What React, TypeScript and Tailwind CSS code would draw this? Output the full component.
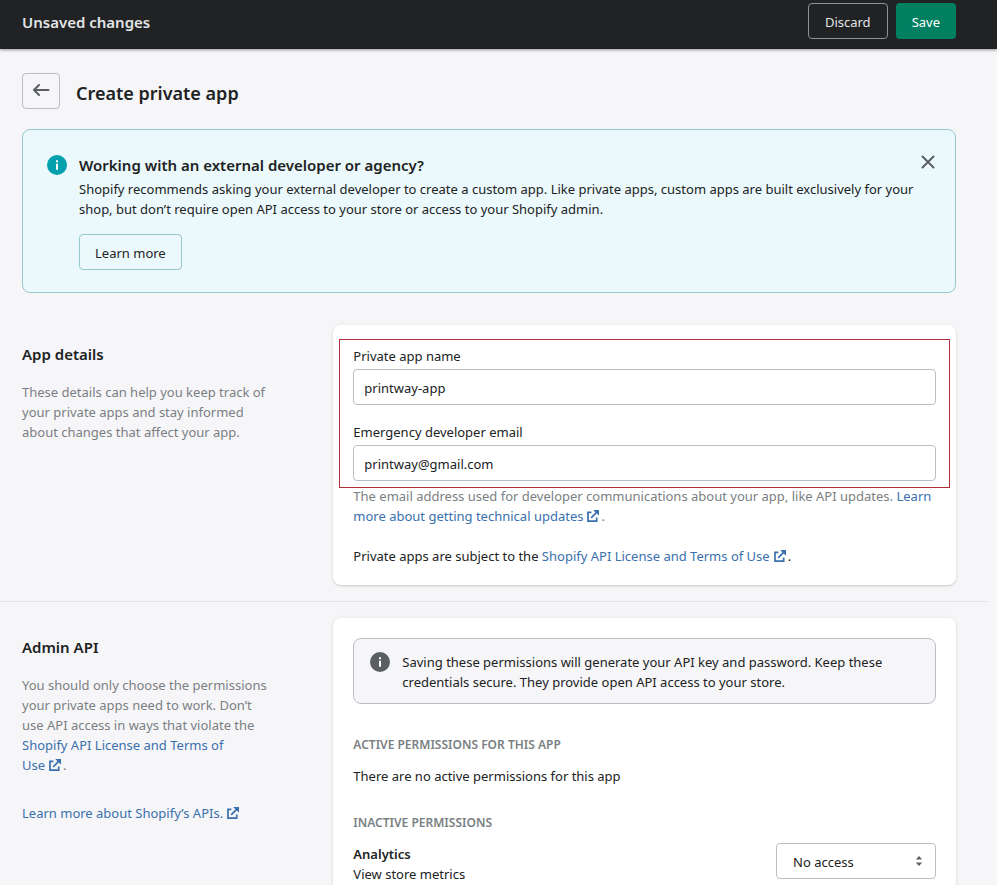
import React from "react";

function ExternalIcon() {
  return (
    <svg viewBox="0 0 12 12" className="mr-0.5 ml-1 inline h-3 w-3 align-[-1px]" fill="none" stroke="currentColor" strokeWidth="1.7" aria-hidden="true">
      <path d="M4.4 2.4H1v8.7h8.7V7.4" />
      <path d="M4.2 7.8 9.8 2.2" />
      <path d="M6.2 0H12v5.8L10.3 4.1 7.9 1.7z" fill="currentColor" stroke="none" />
    </svg>
  );
}

function InfoIcon({ className }: { className: string }) {
  return (
    <svg viewBox="0 0 20 20" className={className} aria-hidden="true">
      <circle cx="10" cy="10" r="10" fill="currentColor" />
      <path d="M9 5.2h2v2H9zM9 8.8h2v6H9z" fill="#fff" />
    </svg>
  );
}

function ExternalLink({ text, lastWord }: { text: string; lastWord: string }) {
  return (
    <a href="#" className="text-[#3a70ad] hover:underline">
      {text}{" "}
      <span className="whitespace-nowrap">
        {lastWord}
        <ExternalIcon />
      </span>
    </a>
  );
}

function TextField({ id, label, type, value }: { id: string; label: string; type: string; value: string }) {
  return (
    <div className="flex flex-col gap-[3px]">
      <label htmlFor={id}>{label}</label>
      <input
        id={id}
        type={type}
        defaultValue={value}
        className="h-9 w-full rounded border border-[#babfc3] bg-white px-2.5 pt-0.5 outline-none"
      />
    </div>
  );
}

function Section({ title, description, children }: { title: string; description: React.ReactNode; children: React.ReactNode }) {
  return (
    <section className="grid grid-cols-3 pr-8 pl-[22px]">
      <div className="pt-[19px] pr-16">
        <h2 className="text-[15px] leading-5 font-semibold">{title}</h2>
        <div className="mt-[18px] text-[#7a7f83]">{description}</div>
      </div>
      <div className="col-span-2 rounded-lg bg-white p-5 shadow-[0_0_5px_rgba(23,24,24,0.05),0_1px_2px_rgba(0,0,0,0.15)]">
        {children}
      </div>
    </section>
  );
}

export default function App() {
  return (
    <div className="h-screen overflow-hidden bg-[#f6f6f8] font-['Noto_Sans','Open_Sans',sans-serif] text-[13px] leading-5 text-[#202223]">
      <header className="flex items-center justify-between bg-[#202223] pt-[3px] pr-[41px] pb-2.5 pl-[22px] shadow-[0_1px_3px_rgba(0,0,0,0.4)]">
        <span className="pt-0.5 text-[15px] font-semibold text-[#e3e5e7]">Unsaved changes</span>
        <div className="flex gap-2">
          <button className="h-9 rounded border border-[#8c9196] px-4 pt-0.5 text-[#e3e5e7]">Discard</button>
          <button className="h-9 rounded bg-[#008060] px-4 pt-0.5 text-white">Save</button>
        </div>
      </header>

      <main className="mr-[9px]">
        <div className="flex items-center gap-4 pt-6 pr-8 pl-[22px]">
          <button aria-label="Back" className="flex h-9 w-[38px] items-center justify-center rounded border border-[#babfc3] text-[#5c5f62]">
            <svg viewBox="0 0 18 14" className="h-3.5 w-[18px]" fill="none" stroke="currentColor" strokeWidth="2" strokeLinecap="round" strokeLinejoin="round" aria-hidden="true">
              <path d="M16.5 6H2M7 1 2 6l5 5" />
            </svg>
          </button>
          <h1 className="pt-1 text-lg leading-7 font-semibold">Create private app</h1>
        </div>

        <div className="mt-5 mr-8 ml-[22px] flex rounded-lg border border-[#98c6cd] bg-[#ebf9fc] pt-[25px] pr-5 pb-[22px] pl-6">
          <InfoIcon className="h-5 w-5 shrink-0 text-[#00a0ac]" />
          <div className="ml-3 flex-1">
            <h2 className="mb-1 text-[15px] leading-5 font-semibold">Working with an external developer or agency?</h2>
            <p>
              Shopify recommends asking your external developer to create a custom app. Like private apps, custom apps are built
              exclusively for your shop, but don’t require open API access to your store or access to your Shopify admin.
            </p>
            <button className="mt-[15px] h-9 rounded border border-[#98c6cd] px-[15px] pt-0.5">Learn more</button>
          </div>
          <button aria-label="Dismiss" className="flex h-3.5 w-3.5 items-center justify-center text-[#5c5f62]">
            <svg viewBox="0 0 14 14" className="h-3.5 w-3.5" fill="none" stroke="currentColor" strokeWidth="2" strokeLinecap="round" aria-hidden="true">
              <path d="m1.5 1.5 11 11M12.5 1.5l-11 11" />
            </svg>
          </button>
        </div>

        <div className="mt-8">
          <Section
            title="App details"
            description="These details can help you keep track of your private apps and stay informed about changes that affect your app."
          >
            <div className="relative mt-px flex flex-col gap-[17px]">
              <TextField id="app-name" label="Private app name" type="text" value="printway-app" />
              <TextField id="dev-email" label="Emergency developer email" type="email" value="printway@gmail.com" />
              <div className="pointer-events-none absolute -inset-x-3.5 -inset-y-[7px] border border-current text-[#b22d3a]" />
            </div>
            <p className="mt-[5px] text-[#7a7f83]">
              The email address used for developer communications about your app, like API updates.{" "}
              <ExternalLink text="Learn more about getting technical" lastWord="updates" />.
            </p>
            <p className="mt-5 -mb-px">
              Private apps are subject to the <ExternalLink text="Shopify API License and Terms of" lastWord="Use" />.
            </p>
          </Section>
        </div>

        <hr className="mt-4 mb-4 border-[#e1e3e5]" />

        <Section
          title="Admin API"
          description={
            <>
              <p>
                You should only choose the permissions your private apps need to work. Don’t use API access in ways that violate
                the <ExternalLink text="Shopify API License and Terms of" lastWord="Use" />.
              </p>
              <p className="mt-7">
                <ExternalLink text="Learn more about Shopify’s" lastWord="APIs." />
              </p>
            </>
          }
        >
          <div className="flex gap-3 rounded-lg border border-[#babfc3] bg-[#f6f6f8] px-4 pt-[13px] pb-[11px]">
            <InfoIcon className="h-5 w-5 shrink-0 text-[#5c5f62]" />
            <p>
              Saving these permissions will generate your API key and password. Keep these credentials secure. They provide open
              API access to your store.
            </p>
          </div>
          <h3 className="mt-[31px] text-xs leading-5 font-semibold text-[#7a7f83] uppercase">Active permissions for this app</h3>
          <p className="mt-[11px]">There are no active permissions for this app</p>
          <h3 className="mt-[27px] text-xs leading-5 font-semibold text-[#7a7f83] uppercase">Inactive permissions</h3>
          <div className="mt-2.5 flex justify-between">
            <div className="pt-px">
              <label htmlFor="analytics" className="block font-semibold">Analytics</label>
              <p>View store metrics</p>
            </div>
            <div className="relative">
              <select id="analytics" className="h-9 w-40 appearance-none rounded border border-[#babfc3] bg-white px-4 pt-0.5">
                <option>No access</option>
                <option>Read access</option>
                <option>Read and write</option>
              </select>
              <svg viewBox="0 0 8 12" className="pointer-events-none absolute top-3 right-[13px] h-3 w-2 text-[#5c5f62]" fill="currentColor" aria-hidden="true">
                <path d="M4 1 7.2 4.6H.8zM4 11 .8 7.4h6.4z" />
              </svg>
            </div>
          </div>
        </Section>
      </main>
    </div>
  );
}
